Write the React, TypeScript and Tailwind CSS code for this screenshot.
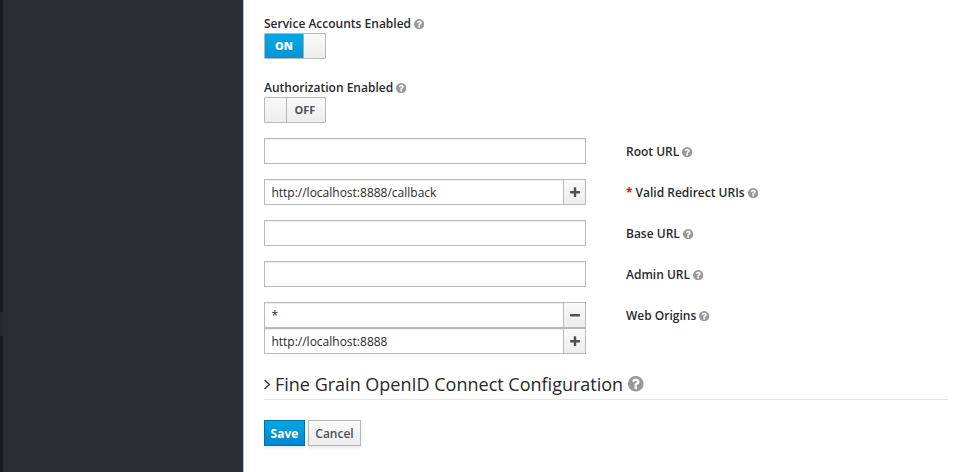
const silver = "bg-gradient-to-b from-[#fafafa] to-[#ededed]";

function Help({ large = false }: { large?: boolean }) {
  return (
    <svg
      viewBox="128 128 1536 1536"
      fill="currentColor"
      className={large ? "ml-[5px] size-[15.5px] shrink-0 text-[#999]" : "ml-[3px] size-[10.3px] shrink-0 text-[#999]"}
    >
      <path d="M1024 1376v-192q0-14-9-23t-23-9h-192q-14 0-23 9t-9 23v192q0 14 9 23t23 9h192q14 0 23-9t9-23zm256-672q0-88-55.5-163t-138.5-116-170-41q-243 0-371 213-15 24 8 42l132 100q7 6 19 6 16 0 25-12 53-68 86-92 34-24 86-24 48 0 85.5 26t37.5 59q0 38-20 61t-68 45q-63 28-115.5 86.5t-52.5 125.5v36q0 14 9 23t23 9h192q14 0 23-9t9-23q0-19 21.5-49.5t54.5-49.5q32-18 49-28.5t46-35 44.5-48 28-60.5 12.5-81zm384 192q0 209-103 385.5t-279.5 279.5-385.5 103-385.5-103-279.5-279.5-103-385.5 103-385.5 279.5-279.5 385.5-103 385.5 103 279.5 279.5 103 385.5z" />
    </svg>
  );
}

function Label({ text, required = false }: { text: string; required?: boolean }) {
  return (
    <label className="flex h-[18px] items-center whitespace-nowrap text-[12px] leading-[18px] font-semibold text-[#292929]">
      {required && <span className="mr-[3px] font-bold text-[#f00]">*</span>}
      {text}
      <Help />
    </label>
  );
}

function Toggle({ on }: { on: boolean }) {
  return (
    <div className="flex h-[26px] w-[62px] rounded-[1px] border border-[#b7b7b7]">
      {on ? (
        <>
          <span className="flex w-[38px] items-center justify-center bg-gradient-to-b from-[#00a8e1] to-[#0095d9] text-[11px] font-extrabold text-white">
            ON
          </span>
          <span className={`flex-1 border-l border-[#aaa] ${silver}`} />
        </>
      ) : (
        <>
          <span className={`w-[22px] border-r border-[#b7b7b7] ${silver}`} />
          <span className={`flex flex-1 items-center justify-center pr-[2px] text-[11px] font-bold text-[#4d5258] ${silver}`}>
            OFF
          </span>
        </>
      )}
    </div>
  );
}

function Field({ value = "", action }: { value?: string; action?: "add" | "remove" }) {
  return (
    <div className="flex h-[26px] w-[322px] border border-[#bababa] bg-white">
      <div className="flex min-w-0 flex-1 items-center pt-[2px] pl-[6.4px] text-[12px] text-[#292929] shadow-[inset_0_1px_1px_rgba(0,0,0,0.075)]">
        {value}
      </div>
      {action && (
        <button className={`flex w-[22px] shrink-0 items-center justify-center border-l border-[#bababa] ${silver}`}>
          <svg width="10" height="10" viewBox="0 0 10 10" fill="#4d5258">
            <rect x="0" y="4" width="10" height="2.4" rx="0.6" />
            {action === "add" && <rect x="3.8" y="0.2" width="2.4" height="9.8" rx="0.6" />}
          </svg>
        </button>
      )}
    </div>
  );
}

function Row({ label, required, value, action }: { label: string; required?: boolean; value?: string; action?: "add" | "remove" }) {
  return (
    <div className="flex h-[26px] items-start gap-[40px]">
      <Field value={value} action={action} />
      <div className="pt-[5px]">
        <Label text={label} required={required} />
      </div>
    </div>
  );
}

export default function App() {
  return (
    <div className="flex h-[472px] w-[965px] overflow-hidden bg-white font-['Open_Sans',sans-serif]">
      <aside className="flex w-[244px] shrink-0 border-r border-[#bbb] bg-[#292e34]">
        <div className="flex w-[3px] flex-col bg-[#181b1f] pt-[312px]">
          <div className="h-[24px] bg-[#232831]" />
        </div>
      </aside>
      <main className="w-[704px] pt-[15px] pl-[20px]">
        <Label text="Service Accounts Enabled" />
        <Toggle on />
        <div className="mt-[20px]">
          <Label text="Authorization Enabled" />
          <Toggle on={false} />
        </div>
        <div className="mt-[15px] flex flex-col gap-[15px]">
          <Row label="Root URL" />
          <Row label="Valid Redirect URIs" required value="http://localhost:8888/callback" action="add" />
          <Row label="Base URL" />
          <Row label="Admin URL" />
          <div>
            <Row label="Web Origins" value="*" action="remove" />
            <Field value="http://localhost:8888" action="add" />
          </div>
        </div>
        <h2 className="mt-[15px] flex h-[31px] items-center border-b border-[#e3e3e3] text-[18px] whitespace-nowrap text-[#292929]">
          <svg className="mt-px mr-[4.5px]" width="6.5" height="11" viewBox="0 0 6.5 11" fill="none" stroke="#333" strokeWidth="1.4">
            <path d="M0.6 0.9 L5.4 5.5 L0.6 10.1" />
          </svg>
          Fine Grain OpenID Connect Configuration
          <Help large />
        </h2>
        <div className="mt-[20px] flex gap-[3px] text-[12px]">
          <button className="h-[26px] w-[41px] border border-[#0071a6] bg-gradient-to-b from-[#00a8e1] to-[#0085cf] pt-[2px] font-bold text-white shadow-[0_2px_3px_rgba(0,0,0,0.1)]">
            Save
          </button>
          <button className={`h-[26px] w-[53px] border border-[#b7b7b7] pt-[2px] font-semibold text-[#4d5258] shadow-[0_2px_3px_rgba(0,0,0,0.1)] ${silver}`}>
            Cancel
          </button>
        </div>
      </main>
    </div>
  );
}
